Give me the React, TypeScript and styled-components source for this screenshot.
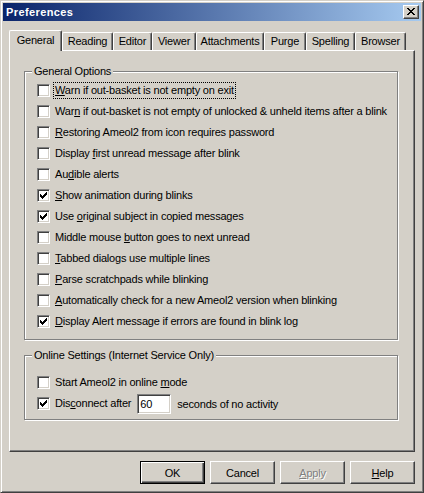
import React from 'react';
import styled, { createGlobalStyle } from 'styled-components';

const Global = createGlobalStyle`
  html, body { margin: 0; padding: 0; background: #d4d0c8; }
  body { font-family: "Liberation Sans", Arial, sans-serif; font-size: 11px; color: #000; }
  * { box-sizing: border-box; }
`;

const Window = styled.div`
  width: 424px;
  height: 493px;
  display: flex;
  flex-direction: column;
  background: #d4d0c8;
  border-top: 1px solid #d4d0c8;
  border-left: 1px solid #d4d0c8;
  border-right: 1px solid #404040;
  border-bottom: 1px solid #404040;
  box-shadow: inset 1px 1px 0 #fff, inset -1px -1px 0 #808080;
  padding: 2px;
`;

const TitleBar = styled.div`
  height: 18px;
  flex: none;
  display: flex;
  align-items: center;
  padding: 0 2px 0 3px;
  background: linear-gradient(to right, #0a246a, #a6caf0);
`;

const TitleText = styled.span`
  color: #fff;
  font-weight: bold;
  font-size: 11px;
  letter-spacing: 0.4px;
`;

const CloseButton = styled.div`
  margin-left: auto;
  width: 16px;
  height: 14px;
  display: flex;
  align-items: center;
  justify-content: center;
  background: #d4d0c8;
  border-top: 1px solid #fff;
  border-left: 1px solid #fff;
  border-right: 1px solid #404040;
  border-bottom: 1px solid #404040;
  box-shadow: inset -1px -1px 0 #808080;
  padding: 0 1px 1px 0;
`;

const Body = styled.div`
  flex: 1;
  display: flex;
  flex-direction: column;
  padding: 9px 6px 6px 6px;
`;

const TabStrip = styled.div`
  height: 20px;
  display: flex;
  align-items: flex-end;
  position: relative;
  z-index: 1;
`;

const Tab = styled.div<{ $w: number; $active?: boolean }>`
  width: ${(p) => p.$w}px;
  height: ${(p) => (p.$active ? 21 : 18)}px;
  margin-bottom: ${(p) => (p.$active ? -1 : 0)}px;
  padding-bottom: ${(p) => (p.$active ? 2 : 1)}px;
  display: flex;
  align-items: center;
  justify-content: center;
  background: #d4d0c8;
  border-top: 1px solid #fff;
  border-left: 1px solid #fff;
  border-right: 1px solid #404040;
  border-radius: 2px 2px 0 0;
  box-shadow: inset -1px 0 0 #808080;
  letter-spacing: -0.2px;
  white-space: nowrap;
`;

const Panel = styled.div`
  height: 402px;
  flex: none;
  display: flex;
  flex-direction: column;
  gap: 9px;
  padding: 14px 16px 0 14px;
  border-top: 1px solid #fff;
  border-left: 1px solid #fff;
  border-right: 1px solid #404040;
  border-bottom: 1px solid #404040;
  box-shadow: inset -1px -1px 0 #808080;
`;

const Group = styled.fieldset`
  margin: 0;
  padding: 0;
  min-width: 0;
  border: 1px solid #808080;
  box-shadow: 1px 1px 0 #fff, inset 1px 1px 0 #fff;
`;

const GroupTitle = styled.legend`
  margin-left: 7px;
  padding: 0 2px;
  line-height: 13px;
  background: #d4d0c8;
  letter-spacing: -0.2px;
`;

const Rows = styled.div<{ $top: number; $bottom: number }>`
  display: flex;
  flex-direction: column;
  padding: ${(p) => p.$top}px 12px ${(p) => p.$bottom}px 12px;
`;

const Row = styled.div`
  height: 21px;
  display: flex;
  align-items: center;
  white-space: nowrap;
`;

const Box = styled.span`
  width: 13px;
  height: 13px;
  flex: none;
  display: flex;
  align-items: center;
  justify-content: center;
  background: #fff;
  border-top: 1px solid #808080;
  border-left: 1px solid #808080;
  border-right: 1px solid #fff;
  border-bottom: 1px solid #fff;
  box-shadow: inset 1px 1px 0 #404040, inset -1px -1px 0 #d4d0c8;
  margin-right: 3px;
`;

const Label = styled.span<{ $focus?: boolean }>`
  padding: 1px;
  line-height: 13px;
  border: 1px ${(p) => (p.$focus ? 'dotted #000' : 'solid transparent')};
  letter-spacing: -0.2px;
`;

const Key = styled.u`
  text-decoration: underline;
  text-underline-offset: 1px;
`;

const Field = styled.span`
  width: 34px;
  height: 20px;
  margin: 0 6px 0 4px;
  display: flex;
  align-items: center;
  padding-left: 2px;
  background: #fff;
  border-top: 1px solid #808080;
  border-left: 1px solid #808080;
  border-right: 1px solid #fff;
  border-bottom: 1px solid #fff;
  box-shadow: inset 1px 1px 0 #404040, inset -1px -1px 0 #d4d0c8;
  letter-spacing: -0.2px;
`;

const Plain = styled.span`
  letter-spacing: -0.2px;
`;

const ButtonRow = styled.div`
  margin-top: 9px;
  display: flex;
  justify-content: flex-end;
  gap: 5px;
`;

const Button = styled.div<{ $default?: boolean; $disabled?: boolean }>`
  width: 65px;
  height: 23px;
  display: flex;
  align-items: center;
  justify-content: center;
  background: #d4d0c8;
  letter-spacing: -0.2px;
  color: ${(p) => (p.$disabled ? '#808080' : '#000')};
  text-shadow: ${(p) => (p.$disabled ? '1px 1px 0 #fff' : 'none')};
  ${(p) =>
    p.$default
      ? `border: 1px solid #000;
         box-shadow: inset 1px 1px 0 #fff, inset -1px -1px 0 #404040, inset -2px -2px 0 #808080;`
      : `border-top: 1px solid #fff;
         border-left: 1px solid #fff;
         border-right: 1px solid #404040;
         border-bottom: 1px solid #404040;
         box-shadow: inset -1px -1px 0 #808080;`}
`;

const Check = () => (
  <svg width="7" height="7" viewBox="0 0 7 7" shapeRendering="crispEdges">
    <path
      fill="#000"
      d="M0 2h1v3H0z M1 3h1v3H1z M2 4h1v3H2z M3 3h1v3H3z M4 2h1v3H4z M5 1h1v3H5z M6 0h1v3H6z"
    />
  </svg>
);

const CloseGlyph = () => (
  <svg width="8" height="7" viewBox="0 0 8 7" shapeRendering="crispEdges">
    <path
      fill="#000"
      d="M0 0h2v1H0z M6 0h2v1H6z M1 1h2v1H1z M5 1h2v1H5z M2 2h4v1H2z M3 3h2v1H3z M2 4h4v1H2z M1 5h2v1H1z M5 5h2v1H5z M0 6h2v1H0z M6 6h2v1H6z"
    />
  </svg>
);

type Opt = { pre: string; k: string; post: string; checked?: boolean; focus?: boolean };

const options: Opt[] = [
  { pre: '', k: 'W', post: 'arn if out-basket is not empty on exit', focus: true },
  { pre: 'War', k: 'n', post: ' if out-basket is not empty of unlocked & unheld items after a blink' },
  { pre: '', k: 'R', post: 'estoring Ameol2 from icon requires password' },
  { pre: 'Display ', k: 'f', post: 'irst unread message after blink' },
  { pre: 'Au', k: 'd', post: 'ible alerts' },
  { pre: '', k: 'S', post: 'how animation during blinks', checked: true },
  { pre: 'Use ', k: 'o', post: 'riginal subject in copied messages', checked: true },
  { pre: 'Middle mouse ', k: 'b', post: 'utton goes to next unread' },
  { pre: '', k: 'T', post: 'abbed dialogs use multiple lines' },
  { pre: '', k: 'P', post: 'arse scratchpads while blinking' },
  { pre: '', k: 'A', post: 'utomatically check for a new Ameol2 version when blinking' },
  { pre: '', k: 'D', post: 'isplay Alert message if errors are found in blink log', checked: true },
];

const tabs: { name: string; w: number }[] = [
  { name: 'General', w: 53 },
  { name: 'Reading', w: 51 },
  { name: 'Editor', w: 39 },
  { name: 'Viewer', w: 44 },
  { name: 'Attachments', w: 68 },
  { name: 'Purge', w: 42 },
  { name: 'Spelling', w: 49 },
  { name: 'Browser', w: 51 },
];

const CheckRow: React.FC<{ o: Opt }> = ({ o }) => (
  <Row>
    <Box>{o.checked && <Check />}</Box>
    <Label $focus={o.focus}>
      {o.pre}
      <Key>{o.k}</Key>
      {o.post}
    </Label>
  </Row>
);

export default function App() {
  return (
    <>
      <Global />
      <Window>
        <TitleBar>
          <TitleText>Preferences</TitleText>
          <CloseButton>
            <CloseGlyph />
          </CloseButton>
        </TitleBar>
        <Body>
          <TabStrip>
            {tabs.map((t, i) => (
              <Tab key={t.name} $w={t.w} $active={i === 0}>
                {t.name}
              </Tab>
            ))}
          </TabStrip>
          <Panel>
            <Group>
              <GroupTitle>General Options</GroupTitle>
              <Rows $top={2} $bottom={7}>
                {options.map((o) => (
                  <CheckRow key={o.pre + o.k + o.post} o={o} />
                ))}
              </Rows>
            </Group>
            <Group>
              <GroupTitle>Online Settings (Internet Service Only)</GroupTitle>
              <Rows $top={10} $bottom={5}>
                <CheckRow o={{ pre: 'Start Ameol2 in online ', k: 'm', post: 'ode' }} />
                <Row>
                  <Box>
                    <Check />
                  </Box>
                  <Label>
                    Dis<Key>c</Key>onnect after
                  </Label>
                  <Field>60</Field>
                  <Plain>seconds of no activity</Plain>
                </Row>
              </Rows>
            </Group>
          </Panel>
          <ButtonRow>
            <Button $default>OK</Button>
            <Button>Cancel</Button>
            <Button $disabled>
              <Key>A</Key>pply
            </Button>
            <Button>
              <Key>H</Key>elp
            </Button>
          </ButtonRow>
        </Body>
      </Window>
    </>
  );
}
